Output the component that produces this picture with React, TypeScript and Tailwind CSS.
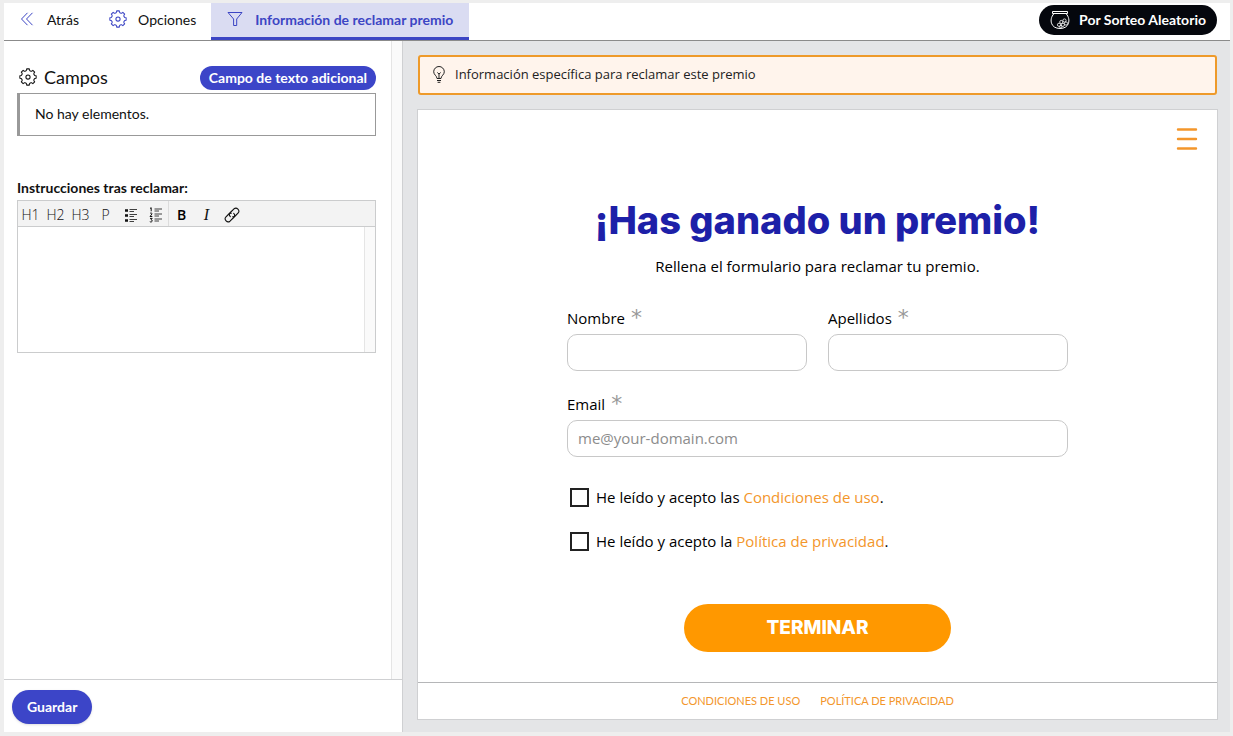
import type { ReactNode } from "react"

const gearOutline = buildGear(8, 11, 8.8)

// Closed outline with rounded teeth, centred on a 24x24 box
function buildGear(teeth: number, outer: number, inner: number) {
  const step = (Math.PI * 2) / teeth
  const point = (radius: number, angle: number) =>
    `${(12 + radius * Math.cos(angle)).toFixed(2)} ${(12 + radius * Math.sin(angle)).toFixed(2)}`
  let d = ""
  for (let i = 0; i < teeth; i++) {
    const a = i * step - Math.PI / 2
    d += `${i === 0 ? "M" : "L"}${point(outer, a - step * 0.2)}`
    d += `L${point(outer, a + step * 0.2)}`
    d += `L${point(inner + 0.5, a + step * 0.27)}`
    d += `Q${point(inner - 0.8, a + step * 0.5)} ${point(inner + 0.5, a + step * 0.73)}`
  }
  return d + "Z"
}

function GearIcon({ className }: { className?: string }) {
  return (
    <svg viewBox="0 0 24 24" fill="none" stroke="currentColor" strokeWidth="1.4" strokeLinejoin="round" className={className} aria-hidden="true">
      <path d={gearOutline} />
      <circle cx="12" cy="12" r="2.8" />
    </svg>
  )
}

function BackIcon() {
  return (
    <svg viewBox="0 0 14 14" fill="none" stroke="currentColor" className="size-[14px]" aria-hidden="true">
      <path d="M7.5 .8 1.5 7l6 6.2M12.5 .8 6.5 7l6 6.2" />
    </svg>
  )
}

function FunnelIcon() {
  return (
    <svg viewBox="0 0 16 16" fill="none" stroke="currentColor" strokeLinejoin="round" className="size-4" aria-hidden="true">
      <path d="M1 1.5h14L9.7 8v6.5H6.6V8z" />
    </svg>
  )
}

function JarIcon() {
  return (
    <svg viewBox="0 0 20 20" fill="none" stroke="currentColor" className="size-5" aria-hidden="true">
      <path d="M2.5 1.5h15v2h-15zM3.8 3.8C1 7 .7 10.5 1.5 13.2c1 3.2 4 5.3 8.5 5.3s7.5-2.1 8.5-5.3c.8-2.7.5-6.2-2.3-9.4" />
      <g strokeWidth=".8">
        <circle cx="14.5" cy="10.5" r="1.6" />
        <circle cx="11.3" cy="12" r="1.6" />
        <circle cx="16" cy="13.5" r="1.6" />
        <circle cx="12.9" cy="14.8" r="1.6" />
        <circle cx="9" cy="14.8" r="1.6" />
        <circle cx="10.8" cy="16.8" r="1.2" />
      </g>
    </svg>
  )
}

function BulbIcon() {
  return (
    <svg viewBox="0 0 12 18" fill="none" stroke="currentColor" className="h-[18px] w-3" aria-hidden="true">
      <path d="M4 12.5C4 9.8.7 8.800.7 5.800a5.300 5.300 0 0 1 10.600 0c0 3-3.300 4-3.300 6.700zM4 14.500h4M4.600 16.300h2.800M4.300 6.500 6 8l1.700-1.500M6 8v4.500" />
    </svg>
  )
}

function BulletListIcon() {
  return (
    <svg viewBox="0 0 14 14" fill="none" stroke="currentColor" className="size-[14px]" aria-hidden="true">
      <path d="M1 2.5h3M1 7.5h3M1 12.5h3" strokeWidth="2.6" />
      <path d="M5.5 1.5H13M5.5 3.5H10M5.5 6.5H13M5.5 8.5H10M5.5 11.5H13M5.5 13.5H10" strokeWidth=".8" />
    </svg>
  )
}

function NumberListIcon() {
  return (
    <svg viewBox="0 0 14 16" fill="none" stroke="currentColor" className="h-4 w-[14px]" aria-hidden="true">
      <path d="M1 1.5 2.2.7v3.600M1 6.500c.6-.8 2.200-.6 2 .4L1 9.500h2.300M1 11.400h2.200L2 12.800c1.800 0 1.600 2.200-.2 2.200L.8 14.600" />
      <path d="M5.5 2H13M5.5 4H10M5.5 7H13M5.5 9H10M5.5 12H13M5.5 14H10" strokeWidth=".8" />
    </svg>
  )
}

function LinkIcon() {
  return (
    <svg viewBox="0 0 16 16" fill="none" stroke="currentColor" strokeWidth="1.1" strokeLinecap="round" className="size-4" aria-hidden="true">
      <path d="M6.3 9.7a3 3 0 0 1 0-4.2l3.7-3.7a3 3 0 0 1 4.2 4.2l-3 3a3 3 0 0 1-2.6.8" />
      <path d="M9.7 6.3a3 3 0 0 1 0 4.2L6 14.2A3 3 0 0 1 1.8 10l3-3a3 3 0 0 1 2.6-.8" />
    </svg>
  )
}

function MenuIcon() {
  return (
    <svg viewBox="0 0 22 22" fill="none" stroke="currentColor" strokeWidth="2.4" strokeLinecap="round" className="size-[22px]" aria-hidden="true">
      <path d="M2 1.5h18M2 11h18M2 20.5h18" />
    </svg>
  )
}

const tools: { name: string; content: ReactNode }[] = [
  { name: "Título 1", content: "H1" },
  { name: "Título 2", content: "H2" },
  { name: "Título 3", content: "H3" },
  { name: "Párrafo", content: "P" },
  { name: "Lista", content: <BulletListIcon /> },
  { name: "Lista numerada", content: <NumberListIcon /> },
]

const inlineTools: { name: string; content: ReactNode }[] = [
  { name: "Negrita", content: <span className="font-semibold text-black">B</span> },
  { name: "Cursiva", content: <span className="font-['Liberation_Serif'] text-base italic">I</span> },
  { name: "Enlace", content: <LinkIcon /> },
]

function ToolButton({ name, children }: { name: string; children: ReactNode }) {
  return (
    <button type="button" aria-label={name} className="flex h-full w-[25px] items-center justify-center pt-[2px]">
      {children}
    </button>
  )
}

function TopBar() {
  return (
    <header className="flex h-[38px] shrink-0 items-stretch justify-between border-b border-[#8b8b8b] bg-white">
      <nav className="flex text-[14px]">
        <button type="button" className="flex items-center gap-[13px] pr-[15px] pb-[5px] pl-4">
          <span className="text-[#3c45c4]"><BackIcon /></span>
          Atrás
        </button>
        <button type="button" className="flex items-center gap-[11px] px-[15px] pb-[5px]">
          <GearIcon className="size-[18px] text-[#3c45c4]" />
          Opciones
        </button>
        <button type="button" className="flex items-center gap-3 border-b-3 border-[#3c45c4] bg-[#dadcf2] px-4 pb-[2px] font-bold text-[#3c45c4]">
          <FunnelIcon />
          Información de reclamar premio
        </button>
      </nav>
      <div className="mt-[2px] mr-[13px] flex h-[30px] items-center gap-[9px] rounded-full bg-[#05070d] px-[11px] pb-px text-[14px] font-bold text-white">
        <JarIcon />
        Por Sorteo Aleatorio
      </div>
    </header>
  )
}

function Sidebar() {
  return (
    <aside className="flex w-[399px] shrink-0 flex-col border-r border-[#cfd0d2] bg-white">
      <div className="flex min-h-0 flex-1">
        <div className="flex-1 px-[13px] pt-[25px] pr-[15px] text-[14px]">
          <div className="flex items-center justify-between">
            <h2 className="flex items-center gap-[7px] pb-[2px] pl-[2px] text-[18px] leading-[22px]">
              <GearIcon className="size-[18px]" />
              Campos
            </h2>
            <button type="button" className="h-6 rounded-full bg-[#3c45c8] px-[9px] pb-[2px] font-bold text-white">
              Campo de texto adicional
            </button>
          </div>
          <p className="mt-[3px] flex h-[43px] items-center border border-l-3 border-[#999] px-[15px] pb-[3px]">No hay elementos.</p>
          <label htmlFor="instrucciones" className="mt-[42px] block leading-5 font-bold">
            Instrucciones tras reclamar:
          </label>
          <div className="mt-[2px] border border-[#cbcccd]">
            <div className="flex h-[26px] border-b border-[#cbcccd] bg-[#f3f3f3] font-['Open_Sans'] text-[14px] font-light text-[#111]">
              <div className="flex border-r border-[#dcdcdc]">
                {tools.map((tool) => (
                  <ToolButton key={tool.name} name={tool.name}>{tool.content}</ToolButton>
                ))}
              </div>
              {inlineTools.map((tool) => (
                <ToolButton key={tool.name} name={tool.name}>{tool.content}</ToolButton>
              ))}
            </div>
            <div className="flex h-[125px]">
              <textarea id="instrucciones" className="flex-1 resize-none p-2 outline-none" />
              <div className="w-[11px] border-l border-[#e5e5e5] bg-[#fafafa]" />
            </div>
          </div>
        </div>
        <div className="w-[11px] border-l border-[#e5e5e5] bg-[#fafafa]" />
      </div>
      <div className="flex h-[53px] shrink-0 items-center border-t border-[#cfd0d2] px-2 pt-px">
        <button type="button" className="h-[34px] rounded-full bg-[#3c45c8] px-[15px] pb-px text-[14px] font-bold text-white shadow-sm">
          Guardar
        </button>
      </div>
    </aside>
  )
}

function Field({ id, label, type = "text", placeholder, className = "" }: { id: string; label: string; type?: string; placeholder?: string; className?: string }) {
  return (
    <div className={className}>
      <label htmlFor={id} className="mb-1 flex h-6 gap-[6px] leading-6">
        {label}
        <span className="font-['DejaVu_Sans'] text-[22px] text-[#999]">*</span>
      </label>
      <input
        id={id}
        type={type}
        placeholder={placeholder}
        className="block h-[37px] w-full rounded-[10px] border border-[#c8c8c8] px-[10px] pb-[2px] outline-none placeholder:text-[#8c8c8c]"
      />
    </div>
  )
}

function Consent({ id, text, link }: { id: string; text: string; link: string }) {
  return (
    <div className="flex h-6 items-center gap-[7px] pl-[3px]">
      <input id={id} type="checkbox" className="size-[19px] shrink-0 appearance-none border-2 border-[#222] bg-white checked:bg-[#ff9800]" />
      <label htmlFor={id}>
        {text} <a href="#" className="text-[#f3962b]">{link}</a>.
      </label>
    </div>
  )
}

function Preview() {
  return (
    <main className="flex min-w-0 flex-1 flex-col bg-[#e4e5e7] px-[14px] pt-[14px] pr-3 pb-3">
      <div className="mr-px ml-px flex h-10 shrink-0 items-center gap-[10px] rounded-[3px] border-2 border-[#ee9a2a] bg-[#fff4ec] px-[13px] font-['Open_Sans'] text-[13px] text-[#222]">
        <BulbIcon />
        Información específica para reclamar este premio
      </div>
      <section className="mt-[14px] flex flex-1 flex-col border border-[#cfd0d2] bg-white text-black">
        <div className="flex justify-end px-[19px] pt-[18px]">
          <button type="button" aria-label="Menú" className="text-[#f3962b]">
            <MenuIcon />
          </button>
        </div>
        <form className="mx-auto mt-12 flex w-full max-w-[501px] flex-col font-['Open_Sans'] text-[15px]">
          <h1 className="text-center font-['Inter'] text-[38px] leading-[44px] font-extrabold whitespace-nowrap text-[#1d20a8]">¡Has ganado un premio!</h1>
          <p className="mt-3 text-center leading-6">Rellena el formulario para reclamar tu premio.</p>
          <div className="mt-7 grid grid-cols-2 gap-[21px]">
            <Field id="nombre" label="Nombre" />
            <Field id="apellidos" label="Apellidos" />
            <Field id="email" label="Email" type="email" placeholder="me@your-domain.com" className="col-span-2" />
          </div>
          <div className="mt-7 flex flex-col gap-5">
            <Consent id="condiciones" text="He leído y acepto las" link="Condiciones de uso" />
            <Consent id="privacidad" text="He leído y acepto la" link="Política de privacidad" />
          </div>
          <button type="submit" className="mx-auto mt-[51px] h-12 w-[267px] rounded-full bg-[#ff9800] font-['Inter'] text-[19px] font-extrabold text-white">
            TERMINAR
          </button>
        </form>
        <footer className="mt-auto flex h-[37px] items-center justify-center gap-5 border-t border-[#b5b6b8] text-[11px] text-[#f3962b]">
          <a href="#">CONDICIONES DE USO</a>
          <a href="#">POLÍTICA DE PRIVACIDAD</a>
        </footer>
      </section>
    </main>
  )
}

export default function App() {
  return (
    <div className="flex min-h-screen flex-col bg-[#eeeeee] pt-[3px] pr-[3px] pb-1 pl-1 font-['Lato',sans-serif] text-[#111]">
      <TopBar />
      <div className="flex flex-1">
        <Sidebar />
        <Preview />
      </div>
    </div>
  )
}
